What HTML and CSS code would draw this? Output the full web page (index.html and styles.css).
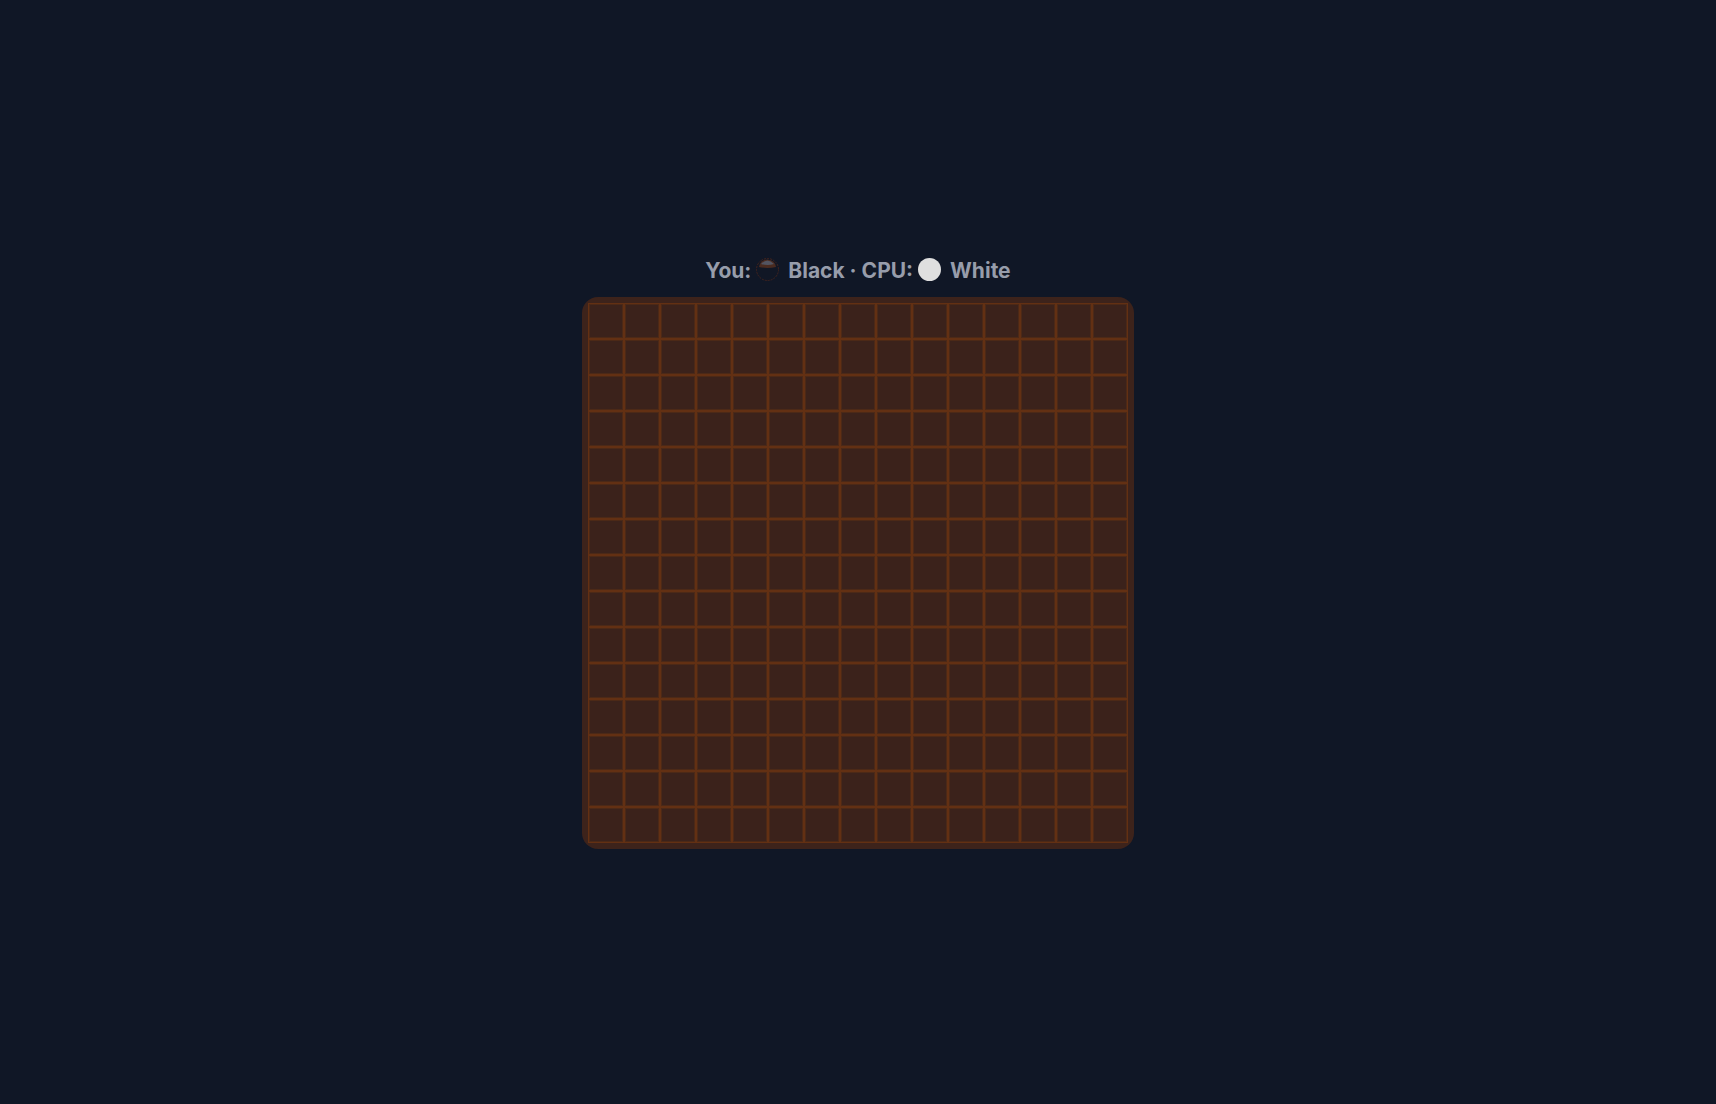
FILE: index.html
```html
<!DOCTYPE html>
<html lang="en">
<head>
<meta charset="utf-8">
<meta name="viewport" content="width=device-width, initial-scale=1">
<title>Gomoku</title>
<link rel="stylesheet" href="styles.css">
</head>
<body>
<main class="game">
  <h1 class="status">You: <svg class="stone" viewBox="0 0 23 23" role="img" aria-label="Black stone"><circle cx="11.500" cy="11.500" r="11" fill="#111725" stroke="#44251f" stroke-dasharray="2 1"/><path d="M3 9Q4 2 11.500 1.500Q19 2 20 9Q11.500 11 3 9Z" fill="#4a2b20"/><path d="M5 6Q11.500 -1 18 6Q11.500 8 5 6Z" fill="#525461"/></svg> Black · CPU: <svg class="stone" viewBox="0 0 23 23" role="img" aria-label="White stone"><circle cx="11.500" cy="11.500" r="11.500" fill="#dfdfdf"/></svg> White</h1>
  <div class="board" id="board"></div>
</main>
<script src="board.js"></script>
</body>
</html>
```
FILE: styles.css
```css
* {
  box-sizing: border-box;
}

body {
  margin: 0;
  background: #101726;
  font-family: Inter, "Liberation Sans", sans-serif;
}

.game {
  min-height: 100vh;
  display: flex;
  flex-direction: column;
  align-items: center;
  justify-content: center;
  gap: 10px;
}

.status {
  margin: 0;
  font-size: 21px;
  line-height: 32px;
  font-weight: 700;
  color: #979dab;
}

.stone {
  width: 23px;
  height: 23px;
  margin-right: 4px;
  vertical-align: -3px;
}

.board {
  display: grid;
  grid-template-columns: repeat(15, 36px);
  padding: 6px;
  border-radius: 16px;
  background: #3d231b;
}

.cell {
  height: 36px;
  padding: 0;
  border: 1px solid #633013;
  background: #3b221b;
  box-shadow: inset 0 0 0 1px #4c2917;
}
```
FILE: board.js
```js
const board = document.getElementById("board");

for (let row = 1; row <= 15; row++) {
  for (let column = 1; column <= 15; column++) {
    const cell = document.createElement("button");
    cell.type = "button";
    cell.className = "cell";
    cell.setAttribute("aria-label", `Row ${row}, column ${column}`);
    board.append(cell);
  }
}
```
